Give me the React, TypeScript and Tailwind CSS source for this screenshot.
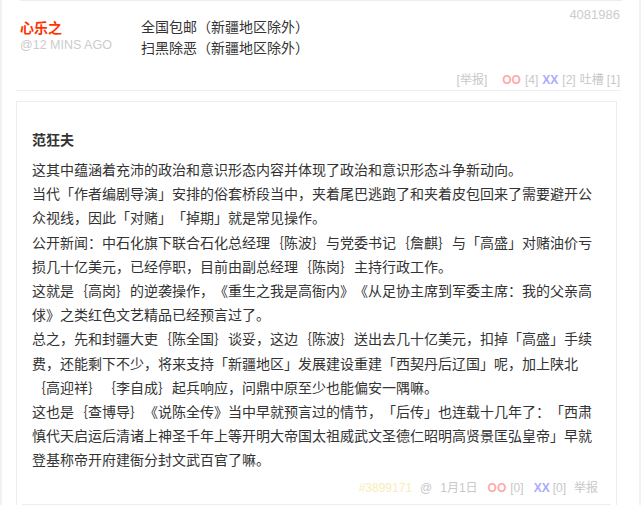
import React from 'react';

const body: string[][] = [
    ['这其中蕴涵着充沛的政治和意识形态内容并体现了政治和意识形态斗争新动向。'],
    ['当代「作者编剧导演」安排的俗套桥段当中，夹着尾巴逃跑了和夹着皮包回来了需要避开公众视线，因此「对赌」「掉期」就是常见操作。'],
    ['公开新闻：中石化旗下联合石化总经理｛陈波｝与党委书记｛詹麒｝与「高盛」对赌油价亏损几十亿美元，已经停职，目前由副总经理｛陈岗｝主持行政工作。'],
    ['这就是｛高岗｝的逆袭操作，《重生之我是高衙内》《从足协主席到军委主席：我的父亲高俅》之类红色文艺精品已经预言过了。'],
    ['总之，先和封疆大吏｛陈全国｝谈妥，这边｛陈波｝送出去几十亿美元，扣掉「高盛」手续费，还能剩下不少，将来支持「新疆地区」发展建设重建「西契丹后辽国」呢，加上陕北', '｛高迎祥｝｛李自成｝起兵响应，问鼎中原至少也能偏安一隅嘛。'],
    ['这也是｛查博导｝《说陈全传》当中早就预言过的情节，「后传」也连载十几年了：「西肃慎代天启运后清诸上神圣千年上等开明大帝国太祖威武文圣德仁昭明高贤景匡弘皇帝」早就登基称帝开府建衙分封文武百官了嘛。'],
];

const App: React.FC = () => {
    return (
        <div className="h-[505px] overflow-hidden bg-white border-l-2 border-r-2 border-[#f2f2f2] font-['Liberation_Sans','Noto_Sans_CJK_SC',sans-serif] [text-spacing-trim:space-all]">
            <div className="ml-[18px] w-[602px] h-[2px] border-t border-[#eeeeee]"></div>

            {/* comment */}
            <div className="ml-[14px] w-[605px] h-[89px] border-b border-[#eeeeee] flex flex-col">
                <div className="flex items-start pt-[6px] pl-[4px] pr-[1px]">
                    <div className="w-[121px] mt-[12px]">
                        <div className="text-[14px] leading-[16px] font-bold text-[#ff3300]">心乐之</div>
                        <div className="text-[12.5px] leading-[18px] text-[#cccccc]">@12 MINS AGO</div>
                    </div>
                    <div className="flex-1 mt-[9px] text-[14px] leading-[21px] text-[#333333]">
                        <div>全国包邮（新疆地区除外）</div>
                        <div>扫黑除恶（新疆地区除外）</div>
                    </div>
                    <div className="text-[13px] leading-[14px] text-[#cccccc]">4081986</div>
                </div>
                <div className="mt-auto pb-[1px] pr-[1px] flex justify-end items-center text-[12px] leading-[18px] text-[#c8c8c8]">
                    <span>[举报]</span>
                    <span className="ml-[15px] font-bold text-[#ffaaaa]">OO</span>
                    <span className="ml-[4px]">[4]</span>
                    <span className="ml-[4px] font-bold text-[#aaaaff]">XX</span>
                    <span className="ml-[4px]">[2]</span>
                    <span className="ml-[4px]">吐槽</span>
                    <span className="ml-[3px]">[1]</span>
                </div>
            </div>

            {/* quoted post */}
            <div className="ml-[14px] mt-[10px] w-[601px] border border-[#eeeeee] pt-[26px]">
                <div className="pl-[15px] text-[14px] leading-[24px] font-bold text-[#333333] mb-[6px]">范狂夫</div>
                <div className="pl-[15px] w-[576px] text-[14px] leading-[24.2px] text-[#333333]">
                    {body.map((p, i) => (
                        <p key={i}>
                            {p.map((line, j) => (
                                <React.Fragment key={j}>
                                    {j > 0 && <br />}
                                    {line}
                                </React.Fragment>
                            ))}
                        </p>
                    ))}
                </div>
                <div className="mt-[5px] mx-[5px] pb-[6px] pr-[13px] border-b border-[#eeeeee] flex justify-end items-center text-[12px] leading-[20px] text-[#c8c8c8]">
                    <span className="text-[#f8ecb8]">#3899171</span>
                    <span className="ml-[8px]">@</span>
                    <span className="ml-[8px]">1月1日</span>
                    <span className="ml-[10px] font-bold text-[#ffaaaa]">OO</span>
                    <span className="ml-[4px]">[0]</span>
                    <span className="ml-[10px] font-bold text-[#aaaaff]">XX</span>
                    <span className="ml-[3px]">[0]</span>
                    <span className="ml-[8px]">举报</span>
                </div>
                <div className="h-[20px]"></div>
            </div>
        </div>
    );
};

export default App;
